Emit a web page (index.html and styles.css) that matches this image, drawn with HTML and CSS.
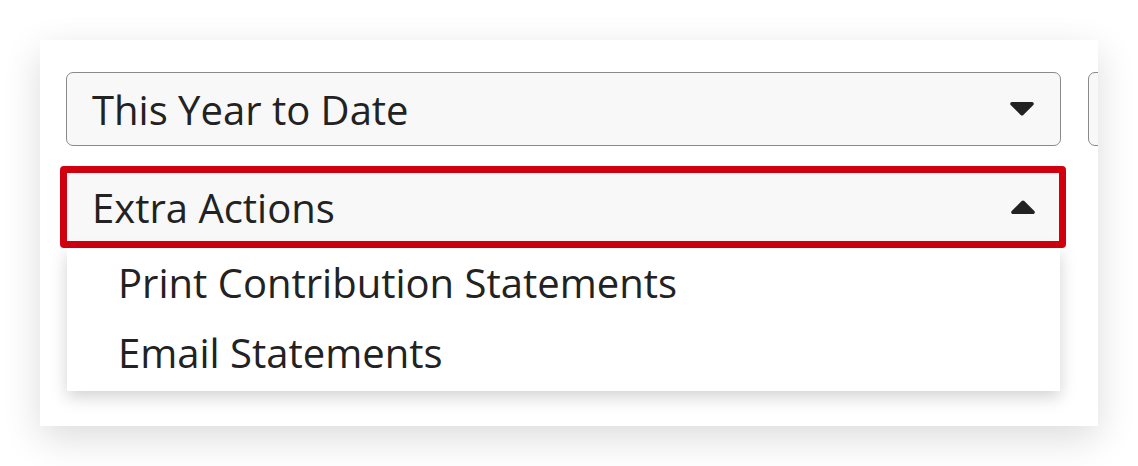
FILE: index.html
```html
<!DOCTYPE html>
<html>
 <head>
  <title>Statements</title>
  <link rel="stylesheet" href="styles.css">
 </head>
<body>
<div class="card">
 <div class="row">
  <div class="select">
   <span class="label">This Year to Date</span>
   <svg class="caret" width="24" height="14" viewBox="0 0 24 14"><path d="M2 0H22C23.6 0 24.4 1.9 23.3 3L13.3 13C12.6 13.7 11.4 13.7 10.7 13L0.7 3C-0.4 1.9 0.4 0 2 0Z"/></svg>
  </div>
  <div class="select"></div>
 </div>
 <div class="actions">
  <div class="select open">
   <span class="label">Extra Actions</span>
   <svg class="caret" width="24" height="14" viewBox="0 0 24 14"><path d="M2 14H22C23.6 14 24.4 12.1 23.3 11L13.3 1C12.6 0.3 11.4 0.3 10.7 1L0.7 11C-0.4 12.1 0.4 14 2 14Z"/></svg>
  </div>
  <ul class="menu">
   <li>Print Contribution Statements</li>
   <li>Email Statements</li>
  </ul>
 </div>
</div>
</body>
</html>
```
FILE: styles.css
```css
BODY {
 margin: 0;
 padding: 40px 0 40px 40px;
 background: white;
 font-family: "Open Sans", "Noto Sans", sans-serif;
 color: #222222;
}
.card {
 box-sizing: border-box;
 width: 1058px;
 height: 386px;
 padding: 32px 0 0 26px;
 background: white;
 box-shadow: 0 12px 36px rgba(0,0,0,0.14);
 overflow: hidden;
}
.row {
 display: flex;
 gap: 27px;
 width: 1100px;
}
.select {
 box-sizing: border-box;
 display: flex;
 align-items: center;
 justify-content: space-between;
 flex: 0 0 995px;
 height: 74px;
 padding: 0 26px 0 25px;
 background: #f8f8f8;
 border: 1.5px solid #8a8a8a;
 border-radius: 7px;
}
.label {
 font-size: 40px;
}
.caret {
 fill: #222222;
}
.actions {
 position: relative;
 margin: 20px 0 0 -6px;
 width: 1006px;
}
.select.open {
 height: 82px;
 border: 7px solid #d0000f;
 border-radius: 4px;
 padding: 0 24px 0 25px;
}
.menu {
 position: absolute;
 left: 7px;
 top: 82px;
 width: 993px;
 margin: 0;
 padding: 0 0 3px 0;
 list-style: none;
 background: white;
 box-shadow: 0 6px 16px rgba(0,0,0,0.18);
}
.menu LI {
 padding: 0 0 0 51px;
 height: 70px;
 line-height: 70px;
 font-size: 40px;
}
```
